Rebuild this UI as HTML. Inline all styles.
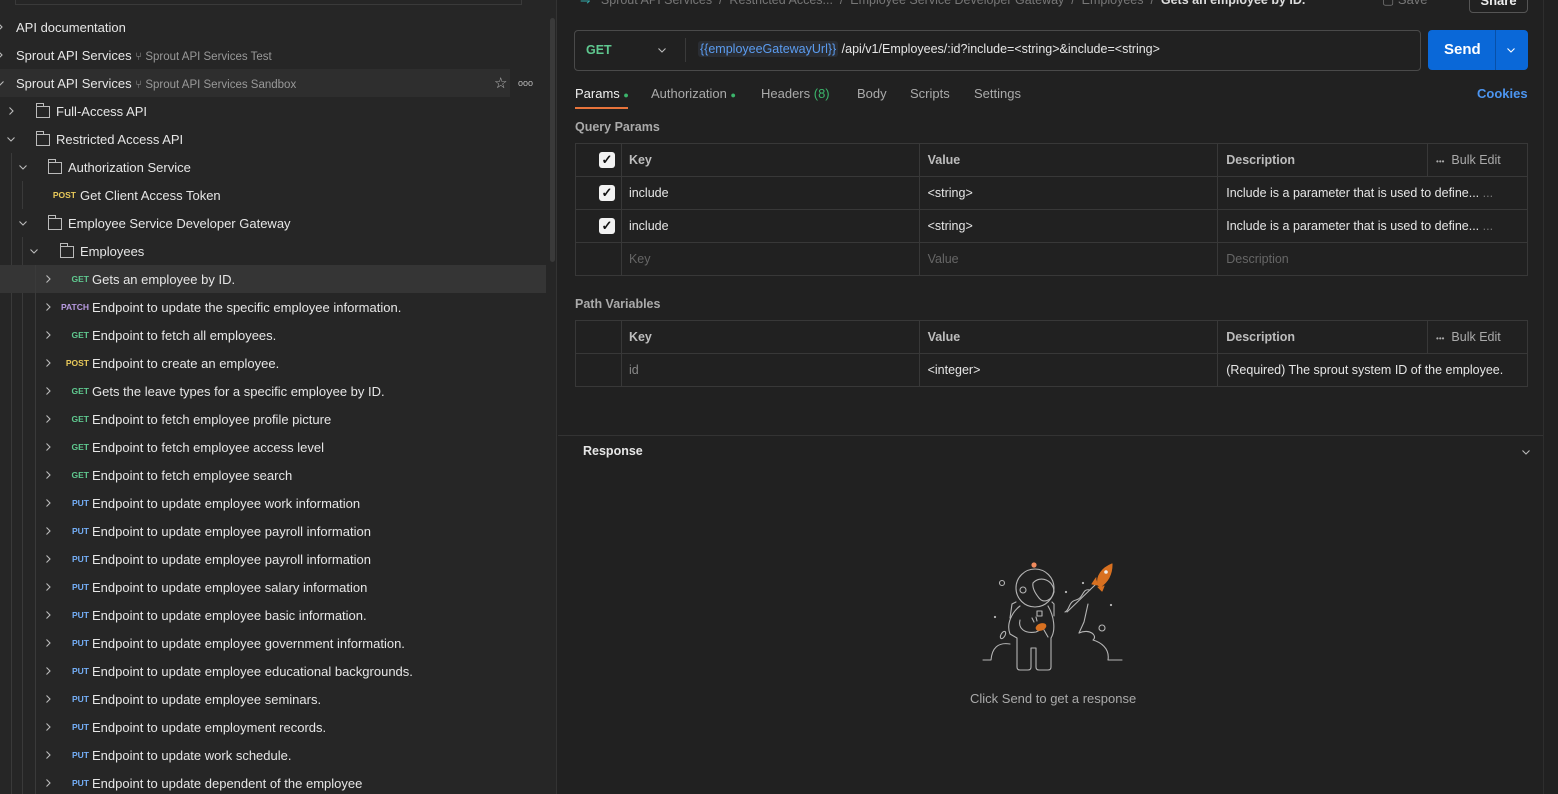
<!DOCTYPE html>
<html><head><meta charset="utf-8"><style>
*{margin:0;padding:0;box-sizing:border-box}
html,body{width:1558px;height:794px;overflow:hidden}
body{background:#212121;font-family:"Liberation Sans",sans-serif;font-size:13px;color:#e6e6e6;position:relative}
.a{position:absolute;white-space:nowrap}
#side{position:absolute;left:0;top:0;width:557px;height:794px;background:#262626;border-right:1px solid #333;overflow:hidden}
.row{position:absolute;left:0;width:546px;height:28px;line-height:29px}
.m{position:absolute;font-size:8.5px;font-weight:bold;text-align:right;width:40px;left:49px;line-height:29px}
.get{color:#5fc88f}.post{color:#e8c95a}.put{color:#74aef6}.patch{color:#b79ae0}
.t{position:absolute;left:92px}
.cr,.cd{position:absolute;top:9px;width:10px;height:10px}
.vl{position:absolute;width:1px;background:#3a3a3a}
.fold{position:absolute;width:14px;height:12px;border:1px solid #bbb;top:9px}
.fold:before{content:"";position:absolute;left:-1px;top:-4px;width:6px;height:3px;border:1px solid #bbb;border-bottom:none}
table{border-collapse:collapse;position:absolute;left:575px;width:953px}
td{border:1px solid #383838;height:33px;padding:0 8px;font-size:12.5px}
.cb{display:inline-block;width:16px;height:16px;background:#f2f2f2;border-radius:3px;color:#111;font-size:13px;line-height:16px;text-align:center;font-weight:bold}
td.c{text-align:right;padding:0 6px 0 0}
.hd td{color:#bdbdbd;font-weight:bold}
.ph{color:#666}
</style></head><body>
<svg width="0" height="0" style="position:absolute"><defs>
<symbol id="r" viewBox="0 0 10 10"><path d="M3.5 1.5L7 5L3.5 8.5" fill="none" stroke="#bbb" stroke-width="1.1"/></symbol>
<symbol id="d" viewBox="0 0 10 10"><path d="M1.5 3.5L5 7L8.5 3.5" fill="none" stroke="#bbb" stroke-width="1.1"/></symbol>
</defs></svg>
<div id="side">
 <div class="a" style="left:15px;top:-2px;width:507px;height:7px;border:1px solid #3a3a3a;border-top:none"></div>
 <div class="a" style="left:550px;top:18px;width:5px;height:244px;background:#3a3a3a;border-radius:3px"></div>
 <div class="row" style="top:13px"><svg class="cr" style="left:-5px"><use href="#r"/></svg><span class="a" style="left:16px">API documentation</span></div>
 <div class="row" style="top:41px"><svg class="cr" style="left:-5px"><use href="#r"/></svg><span class="a" style="left:16px">Sprout API Services <span style="color:#999;font-size:11.5px">⑂ Sprout API Services Test</span></span></div>
 <div class="row" style="top:69px;background:#2e2e2e;width:510px"><svg class="cd" style="left:-5px"><use href="#d"/></svg><span class="a" style="left:16px">Sprout API Services <span style="color:#999;font-size:11.5px">⑂ Sprout API Services Sandbox</span></span><span class="a" style="left:494px;color:#bbb;font-size:15px">☆</span><span class="a" style="left:518px;color:#bbb;font-size:9px">ooo</span></div>
 <div class="row" style="top:97px"><svg class="cr" style="left:6px"><use href="#r"/></svg><span class="fold" style="left:36px"></span><span class="a" style="left:56px">Full-Access API</span></div>
 <div class="row" style="top:125px"><svg class="cd" style="left:6px"><use href="#d"/></svg><span class="fold" style="left:36px"></span><span class="a" style="left:56px">Restricted Access API</span></div>
 <div class="vl" style="left:11px;top:153px;height:641px"></div>
 <div class="row" style="top:153px"><svg class="cd" style="left:18px"><use href="#d"/></svg><span class="fold" style="left:48px"></span><span class="a" style="left:68px">Authorization Service</span></div>
 <div class="vl" style="left:22px;top:181px;height:28px"></div>
 <div class="row" style="top:181px"><span class="m post" style="left:36px">POST</span><span class="a" style="left:80px">Get Client Access Token</span></div>
 <div class="row" style="top:209px"><svg class="cd" style="left:18px"><use href="#d"/></svg><span class="fold" style="left:48px"></span><span class="a" style="left:68px">Employee Service Developer Gateway</span></div>
 <div class="vl" style="left:22px;top:237px;height:557px"></div>
 <div class="row" style="top:237px"><svg class="cd" style="left:29px"><use href="#d"/></svg><span class="fold" style="left:60px"></span><span class="a" style="left:80px">Employees</span></div>
 <div class="row" style="top:265px;background:#353535"></div>
 <div class="vl" style="left:35px;top:265px;height:529px"></div>
 <div id="eps"></div>
</div>
<div class="vl" style="left:1543px;top:0;height:794px;background:#2e2e2e"></div>
<div class="a" style="left:580px;top:-8px;color:#777;font-size:12.5px"><span style="color:#3aa">⇋</span> &nbsp; Sprout API Services &nbsp;/&nbsp; Restricted Acces... &nbsp;/&nbsp; Employee Service Developer Gateway &nbsp;/&nbsp; Employees &nbsp;/&nbsp; <b style="color:#ddd">Gets an employee by ID.</b></div>
<div class="a" style="left:1382px;top:-8px;color:#777">▢ Save</div>
<div class="a" style="left:1469px;top:-10px;width:59px;height:23px;border:1px solid #555;border-radius:4px;color:#eee;font-weight:bold;text-align:center;line-height:19px">Share</div>
<div class="a" style="left:574px;top:30px;width:847px;height:41px;border:1px solid #4a4a4a;border-radius:4px"></div>
<div class="a" style="left:586px;top:43px;color:#5fc88f;font-weight:bold;font-size:12.5px">GET</div>
<svg class="a" style="left:657px;top:45px" width="10" height="10"><use href="#d"/></svg>
<div class="a" style="left:685px;top:38px;width:1px;height:24px;background:#3a3a3a"></div>
<div class="a" style="left:698px;top:42px;font-size:12.5px"><span style="color:#5b9cf0;background:#2a2d33;padding:1px 2px;border-radius:3px">{{employeeGatewayUrl}}</span> /api/v1/Employees/:id?include=&lt;string&gt;&amp;include=&lt;string&gt;</div>
<div class="a" style="left:1428px;top:30px;width:100px;height:40px;background:#0a68d8;border-radius:4px"></div>
<div class="a" style="left:1495px;top:30px;width:1px;height:40px;background:#0850a8"></div>
<div class="a" style="left:1444px;top:41px;color:#fff;font-weight:bold;font-size:15px">Send</div>
<svg class="a" style="left:1506px;top:45px" width="10" height="10" viewBox="0 0 10 10"><path d="M1.5 3.5L5 7L8.5 3.5" fill="none" stroke="#fff" stroke-width="1.1"/></svg>
<div class="a" style="left:575px;top:86px;color:#f0f0f0">Params <span style="color:#3bb56b;font-size:9px">●</span></div>
<div class="a" style="left:575px;top:107px;width:53px;height:2px;background:#e8743b"></div>
<div class="a" style="left:651px;top:86px;color:#aaa">Authorization <span style="color:#3bb56b;font-size:9px">●</span></div>
<div class="a" style="left:761px;top:86px;color:#aaa">Headers <span style="color:#3bb56b">(8)</span></div>
<div class="a" style="left:857px;top:86px;color:#aaa">Body</div>
<div class="a" style="left:910px;top:86px;color:#aaa">Scripts</div>
<div class="a" style="left:974px;top:86px;color:#aaa">Settings</div>
<div class="a" style="left:1477px;top:86px;color:#4c95f0;font-weight:bold">Cookies</div>
<div class="a" style="left:575px;top:120px;color:#aaa;font-weight:bold;font-size:12.5px">Query Params</div>
<table style="top:143px">
<tr class="hd"><td class="c" style="width:46px"><span class="cb">✓</span></td><td style="width:298px;padding-left:7px">Key</td><td style="width:299px">Value</td><td style="width:210px">Description</td><td style="width:100px;font-weight:normal;color:#aaa"><span style="font-size:8px">•••</span> &nbsp;Bulk Edit</td></tr>
<tr><td class="c"><span class="cb">✓</span></td><td style="padding-left:7px">include</td><td>&lt;string&gt;</td><td colspan="2">Include is a parameter that is used to define... <span style="color:#777">...</span></td></tr>
<tr><td class="c"><span class="cb">✓</span></td><td style="padding-left:7px">include</td><td>&lt;string&gt;</td><td colspan="2">Include is a parameter that is used to define... <span style="color:#777">...</span></td></tr>
<tr><td></td><td class="ph" style="padding-left:7px">Key</td><td class="ph">Value</td><td colspan="2" class="ph">Description</td></tr>
</table>
<div class="a" style="left:575px;top:297px;color:#aaa;font-weight:bold;font-size:12.5px">Path Variables</div>
<table style="top:320px">
<tr class="hd"><td style="width:46px"></td><td style="width:298px;padding-left:7px">Key</td><td style="width:299px">Value</td><td style="width:210px">Description</td><td style="width:100px;font-weight:normal;color:#aaa"><span style="font-size:8px">•••</span> &nbsp;Bulk Edit</td></tr>
<tr><td></td><td style="color:#888;padding-left:7px">id</td><td>&lt;integer&gt;</td><td colspan="2">(Required) The sprout system ID of the employee.</td></tr>
</table>
<div class="a" style="left:558px;top:435px;width:985px;height:1px;background:#333"></div>
<div class="a" style="left:583px;top:444px;font-weight:bold;font-size:12.5px">Response</div>
<svg class="a" style="left:1521px;top:447px" width="10" height="10"><use href="#d"/></svg>
<svg class="a" style="left:940px;top:540px" width="220" height="180" viewBox="0 0 220 180" fill="none" stroke="#b5b5b5" stroke-width="1.1" stroke-linecap="round" stroke-linejoin="round">
<circle cx="94" cy="25" r="2.6" fill="#f08a5d" stroke="none"/>
<circle cx="95" cy="48" r="19"/>
<path d="M93 43C100 35 114 40 114 52C112 60 104 64 99 58C95 53 92 48 93 43Z"/>
<circle cx="83" cy="50" r="3"/>
<path d="M76 62L72 64L70 78M112 62L114 64L114 76"/>
<path d="M80 66C72 72 66 84 70 94L77 98L77 127Q77 130 80 130L88 130Q91 130 91 127L91 108L96 108L96 127Q96 130 99 130L108 130Q111 130 111 127L111 98C116 90 114 76 108 66"/>
<path d="M80 80C78 88 84 94 96 92L104 88"/>
<rect x="97" y="71" width="5" height="5"/>
<path d="M92 78L94 82M96 77L97 81"/>
<ellipse cx="101" cy="87" rx="5" ry="3" transform="rotate(-20 101 87)" fill="#d87020" stroke="#d87020"/>
<path d="M104 90L108 97"/>
<path d="M43 120L51 120C52 108 58 102 70 104"/>
<path d="M127 72L155 45"/>
<path d="M125 72C130 70 128 62 136 60C144 58 142 48 150 50"/>
<path d="M139 93C150 88 158 96 153 100C160 102 170 108 168 120L182 120"/>
<path d="M139 93L144 82L148 64"/>
<path d="M158 45C156 36 162 28 172 24C172 34 168 42 160 47Z" fill="#d87020" stroke="#d87020"/>
<circle cx="166" cy="32" r="1.8" fill="#eee" stroke="none"/>
<path d="M156 38L152 44L158 45M164 46L162 51L158 47" fill="#d87020" stroke="#d87020"/>
<circle cx="62" cy="43" r="2.5"/><circle cx="162" cy="88" r="3"/>
<ellipse cx="63" cy="95" rx="2" ry="4" transform="rotate(30 63 95)"/>
<circle cx="126" cy="52" r=".6" fill="#bbb"/><circle cx="143" cy="43" r=".6" fill="#bbb"/><circle cx="55" cy="77" r=".6" fill="#bbb"/><circle cx="171" cy="65" r=".6" fill="#bbb"/>
</svg>
<div class="a" style="left:970px;top:691px;color:#aaa">Click Send to get a response</div>
<script>
var eps=[["get","Gets an employee by ID."],["patch","Endpoint to update the specific employee information."],["get","Endpoint to fetch all employees."],["post","Endpoint to create an employee."],["get","Gets the leave types for a specific employee by ID."],["get","Endpoint to fetch employee profile picture"],["get","Endpoint to fetch employee access level"],["get","Endpoint to fetch employee search"],["put","Endpoint to update employee work information"],["put","Endpoint to update employee payroll information"],["put","Endpoint to update employee payroll information"],["put","Endpoint to update employee salary information"],["put","Endpoint to update employee basic information."],["put","Endpoint to update employee government information."],["put","Endpoint to update employee educational backgrounds."],["put","Endpoint to update employee seminars."],["put","Endpoint to update employment records."],["put","Endpoint to update work schedule."],["put","Endpoint to update dependent of the employee"]];
var h='';eps.forEach(function(e,i){h+='<div class="row" style="top:'+(265+i*28)+'px"><svg class="cr" style="left:43px"><use href="#r"/></svg><span class="m '+e[0]+'">'+e[0].toUpperCase()+'</span><span class="t">'+e[1]+'</span></div>';});
document.getElementById('eps').outerHTML=h;
</script>
</body></html>
